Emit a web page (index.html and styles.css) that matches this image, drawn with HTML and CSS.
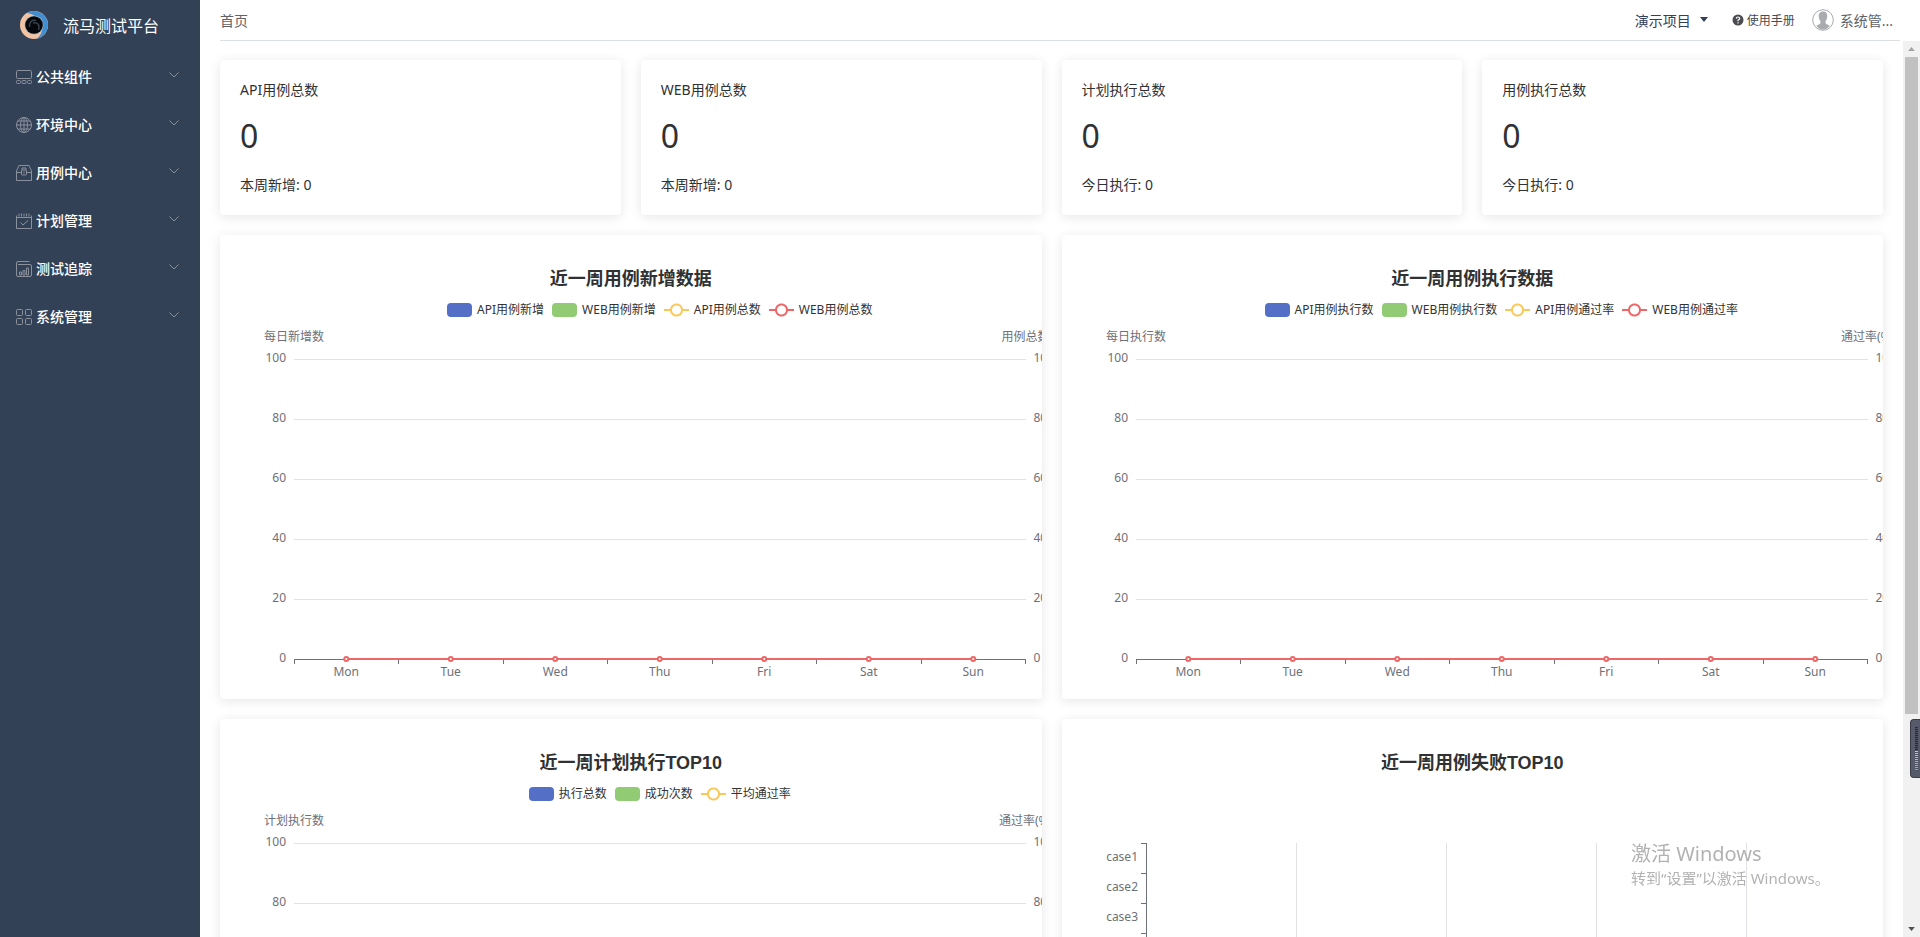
FILE: index.html
```html
<!DOCTYPE html>
<html lang="zh-CN">
<head>
<meta charset="utf-8">
<title>流马测试平台</title>
<link rel="stylesheet" href="styles.css">
</head>
<body>
<div class="app">
  <aside class="sidebar">
    <div class="brand">
      <svg class="logo" viewBox="0 0 28 28" aria-hidden="true">
        <circle cx="14" cy="14" r="14" fill="#f3c3a2"/>
        <path d="M7 1.900A14 14 0 1 1 16 27.900C27 22 22 4 7 1.900Z" fill="#3f8fd2"/>
        <circle cx="14" cy="14" r="9.500" fill="#9fb0bd"/>
        <circle cx="14" cy="14" r="8.800" fill="#05070b"/>
        <path d="M9.500 16C9 11 12 8.500 16 9.500M13 12C18 11 20 14 18.500 19" fill="none" stroke="#39414c" stroke-width="1.500"/>
      </svg>
      <span>流马测试平台</span>
    </div>
    <nav class="menu">
      <button type="button" class="item"><svg class="icon" viewBox="0 0 16 16"><rect x=".5" y="1.500" width="15" height="8" rx="1"/><rect x=".5" y="11.500" width="4" height="3" rx="1"/><rect x="6" y="11.500" width="4" height="3" rx="1"/><rect x="11.500" y="11.500" width="4" height="3" rx="1"/></svg><span>公共组件</span><svg class="chev" viewBox="0 0 10 6"><path d="M.5.5 5 5 9.500.5"/></svg></button>
      <button type="button" class="item"><svg class="icon" viewBox="0 0 16 16"><circle cx="8" cy="8" r="7.500"/><ellipse cx="8" cy="8" rx="3.500" ry="7.500"/><path d="M8 .5v15M.5 8h15M1.800 4h12.400M1.800 12h12.400"/></svg><span>环境中心</span><svg class="chev" viewBox="0 0 10 6"><path d="M.5.5 5 5 9.500.5"/></svg></button>
      <button type="button" class="item"><svg class="icon" viewBox="0 0 16 16"><path d="M.5 15.500V6L3 .5h10L15.500 6v9.500ZM.5 7.500h5M10.500 7.500h5M6 5V3h4v2"/><rect x="5.500" y="5" width="5" height="5" rx="1"/><path d="M8 6.500v2"/></svg><span>用例中心</span><svg class="chev" viewBox="0 0 10 6"><path d="M.5.5 5 5 9.500.5"/></svg></button>
      <button type="button" class="item"><svg class="icon" viewBox="0 0 16 16"><path d="M.5 2.500v13h15v-13M.5 4.500h15M3 .5v3M5.500.5v3M8 .5v3M10.500.5v3M13 .5v3M4.500 9.500 7 12l5-4.500"/></svg><span>计划管理</span><svg class="chev" viewBox="0 0 10 6"><path d="M.5.5 5 5 9.500.5"/></svg></button>
      <button type="button" class="item"><svg class="icon" viewBox="0 0 16 16"><path d="M.5 14V2Q.5.5 2 .5h11.500M2 3.500h12q1.500 0 1.500 1.500v9q0 1.500-1.500 1.500H2Q.5 15.500.5 14M3.500 14v-3h2v3ZM7 14V9.500h2V14ZM10.500 14V7h2v7Z"/></svg><span>测试追踪</span><svg class="chev" viewBox="0 0 10 6"><path d="M.5.5 5 5 9.500.5"/></svg></button>
      <button type="button" class="item"><svg class="icon" viewBox="0 0 16 16"><rect x=".5" y=".5" width="6" height="6" rx="1"/><rect x="9.500" y=".5" width="6" height="6" rx="1"/><rect x=".5" y="9.500" width="6" height="6" rx="1"/><rect x="9.500" y="9.500" width="6" height="6" rx="1"/></svg><span>系统管理</span><svg class="chev" viewBox="0 0 10 6"><path d="M.5.5 5 5 9.500.5"/></svg></button>
    </nav>
  </aside>

  <div class="main">
    <header class="topbar">
      <span class="crumb">首页</span>
      <button type="button" class="project">演示项目<svg class="caret" viewBox="0 0 8 5"><path d="M0 0h8L4 5Z"/></svg></button>
      <a class="manual" href="#"><svg class="help" viewBox="0 0 12 12"><circle cx="6" cy="6" r="5.500" fill="#4a4c50"/><path d="M4.300 4.600Q4.400 3 6 3t1.700 1.500Q7.700 5.400 6 6.200V7.200M6 8.200v1.200" fill="none" stroke="#fff" stroke-width="1.200"/></svg>使用手册</a>
      <button type="button" class="user"><svg class="avatar" viewBox="0 0 22 22"><circle cx="11" cy="11" r="10.300" fill="#fff" stroke="#a9abae"/><path d="M11 2.500c3.500 0 4.500 2.500 4.200 5.500-.2 2-1 3-1.600 4.200-.5 1.400.2 2.600 1.600 3.300l2.500 1.300A9.500 9.500 0 0 1 11 20.800a9.500 9.500 0 0 1-6.700-4l2.500-1.300c1.400-.7 2.100-1.900 1.600-3.300C7.800 11 7 10 6.800 8 6.500 5 7.500 2.500 11 2.500Z" fill="#a9abae"/></svg><span>系统管...</span></button>
    </header>

    <div class="viewport">
      <main class="board">
        <section class="card stat"><h3>API用例总数</h3><strong>0</strong><p>本周新增: 0</p></section>
        <section class="card stat"><h3>WEB用例总数</h3><strong>0</strong><p>本周新增: 0</p></section>
        <section class="card stat"><h3>计划执行总数</h3><strong>0</strong><p>今日执行: 0</p></section>
        <section class="card stat"><h3>用例执行总数</h3><strong>0</strong><p>今日执行: 0</p></section>

        <section class="card chart">
          <h2>近一周用例新增数据</h2>
          <ul class="legend"><li><i class="bar blue"></i>API用例新增</li><li><i class="bar green"></i>WEB用例新增</li><li><i class="line yellow"></i>API用例总数</li><li><i class="line red"></i>WEB用例总数</li></ul>
          <svg class="plot" data-kind="week" data-left="每日新增数" data-right="用例总数"></svg>
        </section>
        <section class="card chart">
          <h2>近一周用例执行数据</h2>
          <ul class="legend"><li><i class="bar blue"></i>API用例执行数</li><li><i class="bar green"></i>WEB用例执行数</li><li><i class="line yellow"></i>API用例通过率</li><li><i class="line red"></i>WEB用例通过率</li></ul>
          <svg class="plot" data-kind="week" data-left="每日执行数" data-right="通过率(%)"></svg>
        </section>
        <section class="card chart">
          <h2>近一周计划执行TOP10</h2>
          <ul class="legend"><li><i class="bar blue"></i>执行总数</li><li><i class="bar green"></i>成功次数</li><li><i class="line yellow"></i>平均通过率</li></ul>
          <svg class="plot" data-kind="plan" data-left="计划执行数" data-right="通过率(%)"></svg>
        </section>
        <section class="card chart">
          <h2>近一周用例失败TOP10</h2>
          <ul class="legend"></ul>
          <svg class="plot cases" data-kind="cases"></svg>
        </section>
      </main>
      <div class="scrollbar" aria-hidden="true">
        <svg class="arrow" viewBox="0 0 17 17"><path d="M5 10.500h7L8.500 6.500Z" fill="#a3a3a3"/></svg>
        <div class="track"><div class="thumb"></div></div>
        <svg class="arrow" viewBox="0 0 17 17"><path d="M5 6.500h7L8.500 10.500Z" fill="#505050"/></svg>
      </div>
    </div>
  </div>
</div>

<div class="watermark"><p class="wm-title">激活 Windows</p><p>转到“设置”以激活 Windows。</p></div>
<div class="meter"><div class="bars"></div></div>
<script src="charts.js"></script>
</body>
</html>
```

FILE: styles.css
```css
* { box-sizing: border-box; }
body, h2, h3, p, ul { margin: 0; padding: 0; }
body {
  font-family: "Noto Sans", "Noto Sans CJK SC", sans-serif;
  font-size: 14px;
  color: #303133;
  background: #fff;
}
button {
  border: 0;
  padding: 0;
  background: none;
  font: inherit;
  color: inherit;
}
.app { display: flex; height: 100vh; overflow: hidden; }

.sidebar { flex: 0 0 200px; background: #334157; color: #fff; }
.brand {
  display: flex;
  align-items: center;
  gap: 15px;
  height: 52px;
  padding: 0 20px 3px;
  font-size: 16px;
}
.logo { width: 28px; height: 28px; }
.menu { display: flex; flex-direction: column; }
.item {
  display: flex;
  align-items: center;
  height: 48px;
  padding: 0 21px 0 16px;
  font-weight: 500;
  text-align: left;
}
.item span { flex: 1; padding-left: 4px; }
.icon { width: 16px; height: 16px; margin-top: 2px; fill: none; stroke: #8b919c; }
.chev { width: 10px; height: 6px; margin-bottom: 2px; fill: none; stroke: #8b919c; }

.main { flex: 1; min-width: 0; display: flex; flex-direction: column; }
.topbar {
  display: flex;
  align-items: center;
  height: 41px;
  margin: 0 20px;
  padding-bottom: 1px;
  border-bottom: 1px solid #dcdfe6;
  color: #606266;
}
.crumb { flex: 1; }
.project { display: flex; align-items: center; gap: 9px; color: #334157; }
.caret { width: 8px; height: 5px; fill: #334157; }
.manual {
  display: flex;
  align-items: center;
  gap: 3px;
  margin: 0 17px 0 24px;
  font-size: 12px;
  color: #4a4c50;
  text-decoration: none;
}
.help { width: 12px; height: 12px; }
.user { display: flex; align-items: center; gap: 6px; margin-right: 7px; }
.avatar { width: 22px; height: 22px; }

.viewport { flex: 1; min-height: 0; display: flex; }
.board {
  flex: 1;
  min-width: 0;
  display: grid;
  grid-template-columns: repeat(4, 1fr);
  grid-auto-rows: max-content;
  align-content: start;
  gap: 20px;
  padding: 19px 20px 0;
  overflow: hidden;
}
.card {
  border-radius: 4px;
  background: #fff;
  box-shadow: 0 2px 12px rgba(0, 0, 0, 0.1);
  overflow: hidden;
}
.stat { padding: 20px; line-height: 20px; }
.stat h3 { font-size: 14px; font-weight: 400; }
.stat strong { display: block; margin: 12px 0 15px; font-size: 32px; font-weight: 400; line-height: 48px; }
.chart { grid-column: span 2; padding-top: 31px; }
.chart h2 {
  font-family: "Liberation Sans", "Noto Sans CJK SC", sans-serif;
  font-size: 18px;
  line-height: 26px;
  text-align: center;
}
.legend {
  display: flex;
  justify-content: center;
  gap: 8px;
  height: 18px;
  margin: 9px 0 40px;
  padding-left: 58px;
  list-style: none;
  font-size: 12px;
  line-height: 18px;
  color: #333;
}
.legend li { display: flex; align-items: center; gap: 5px; }
.bar { width: 25px; height: 14px; border-radius: 4px; background: currentColor; }
.line {
  width: 25px;
  height: 14px;
  background:
    radial-gradient(circle, #fff 4px, currentColor 5px, currentColor 6px, transparent 7px),
    linear-gradient(currentColor, currentColor) center / 100% 2px no-repeat;
}
.blue { color: #5470c6; }
.green { color: #91cc75; }
.yellow { color: #fac858; }
.red { color: #ee6666; }
.plot {
  display: block;
  width: calc(100% - 90px);
  height: 300px;
  margin: 0 16px 40px 74px;
  overflow: visible;
  font-size: 12px;
}
.cases { width: calc(100% - 71px); margin-left: 84px; margin-right: 0; }
.plot text { fill: #6e7079; }
.grid { stroke: #e0e2e6; shape-rendering: crispEdges; }
.axis { stroke: #6e7079; shape-rendering: crispEdges; }
.series { stroke: #ee6666; stroke-width: 2; }
.dot { fill: #fff; stroke: #ee6666; stroke-width: 2; }
.end { text-anchor: end; }
.mid { text-anchor: middle; }

.scrollbar { flex: 0 0 17px; display: flex; flex-direction: column; background: #f1f1f1; }
.arrow { width: 17px; height: 16px; }
.track { flex: 1; padding: 0 2px; }
.thumb { height: 76%; background: #c1c1c1; }

.watermark {
  position: fixed;
  left: 1631px;
  bottom: 49px;
  font-size: 15px;
  line-height: 20px;
  color: #b2b2b2;
  white-space: nowrap;
}
.wm-title { font-size: 20px; line-height: 28px; }
.meter {
  position: fixed;
  right: 0;
  top: 719px;
  width: 10px;
  height: 59px;
  padding: 7px 2px 6px 4px;
  border: 1px solid #3a3d49;
  border-right: 0;
  border-radius: 4px 0 0 4px;
  background: #565b6b;
}
.bars {
  height: 100%;
  background:
    repeating-linear-gradient(transparent 0 1px, #4b505f 1px 2px),
    linear-gradient(#252a38 53%, #b9d98a 53%, #56c79c);
}
```

FILE: charts.js
```javascript
const NS = 'http://www.w3.org/2000/svg';

function add(svg, tag, attrs, text) {
  const el = document.createElementNS(NS, tag);
  for (const key in attrs) el.setAttribute(key, attrs[key]);
  if (text !== undefined) el.textContent = text;
  svg.appendChild(el);
}

const pct = (n) => n + '%';

function drawAxes(svg) {
  for (let v = 0; v <= 100; v += 20) {
    const y = 300 - v * 3;
    add(svg, 'line', { class: v ? 'grid' : 'axis', x1: 0, x2: '100%', y1: y, y2: y });
    add(svg, 'text', { class: 'end', x: -8, y: y + 3 }, v);
    add(svg, 'text', { x: '100%', dx: 8, y: y + 3 }, v);
  }
  add(svg, 'text', { class: 'mid', x: 0, y: -18 }, svg.dataset.left);
  add(svg, 'text', { class: 'mid', x: '100%', y: -18 }, svg.dataset.right);
}

function drawWeek(svg) {
  const days = ['Mon', 'Tue', 'Wed', 'Thu', 'Fri', 'Sat', 'Sun'];
  const step = 100 / days.length;
  for (let i = 0; i <= days.length; i++) {
    add(svg, 'line', { class: 'axis', x1: pct(i * step), x2: pct(i * step), y1: 300, y2: 305 });
  }
  add(svg, 'line', { class: 'series', x1: pct(step / 2), x2: pct(100 - step / 2), y1: 300, y2: 300 });
  days.forEach((day, i) => {
    const x = pct((i + 0.5) * step);
    add(svg, 'circle', { class: 'dot', cx: x, cy: 300, r: 2 });
    add(svg, 'text', { class: 'mid', x: x, y: 317 }, day);
  });
}

function drawCases(svg) {
  for (let i = 1; i <= 5; i++) {
    add(svg, 'line', { class: 'grid', x1: pct(i * 20), x2: pct(i * 20), y1: 0, y2: 300 });
  }
  add(svg, 'line', { class: 'axis', x1: 0, x2: 0, y1: 0, y2: 300 });
  for (let i = 0; i <= 10; i++) {
    add(svg, 'line', { class: 'axis', x1: -5, x2: 0, y1: i * 30, y2: i * 30 });
    if (i < 10) add(svg, 'text', { class: 'end', x: -8, y: i * 30 + 18 }, 'case' + (i + 1));
  }
}

document.querySelectorAll('.plot').forEach((svg) => {
  if (svg.dataset.kind === 'cases') return drawCases(svg);
  drawAxes(svg);
  if (svg.dataset.kind === 'week') drawWeek(svg);
});
```
